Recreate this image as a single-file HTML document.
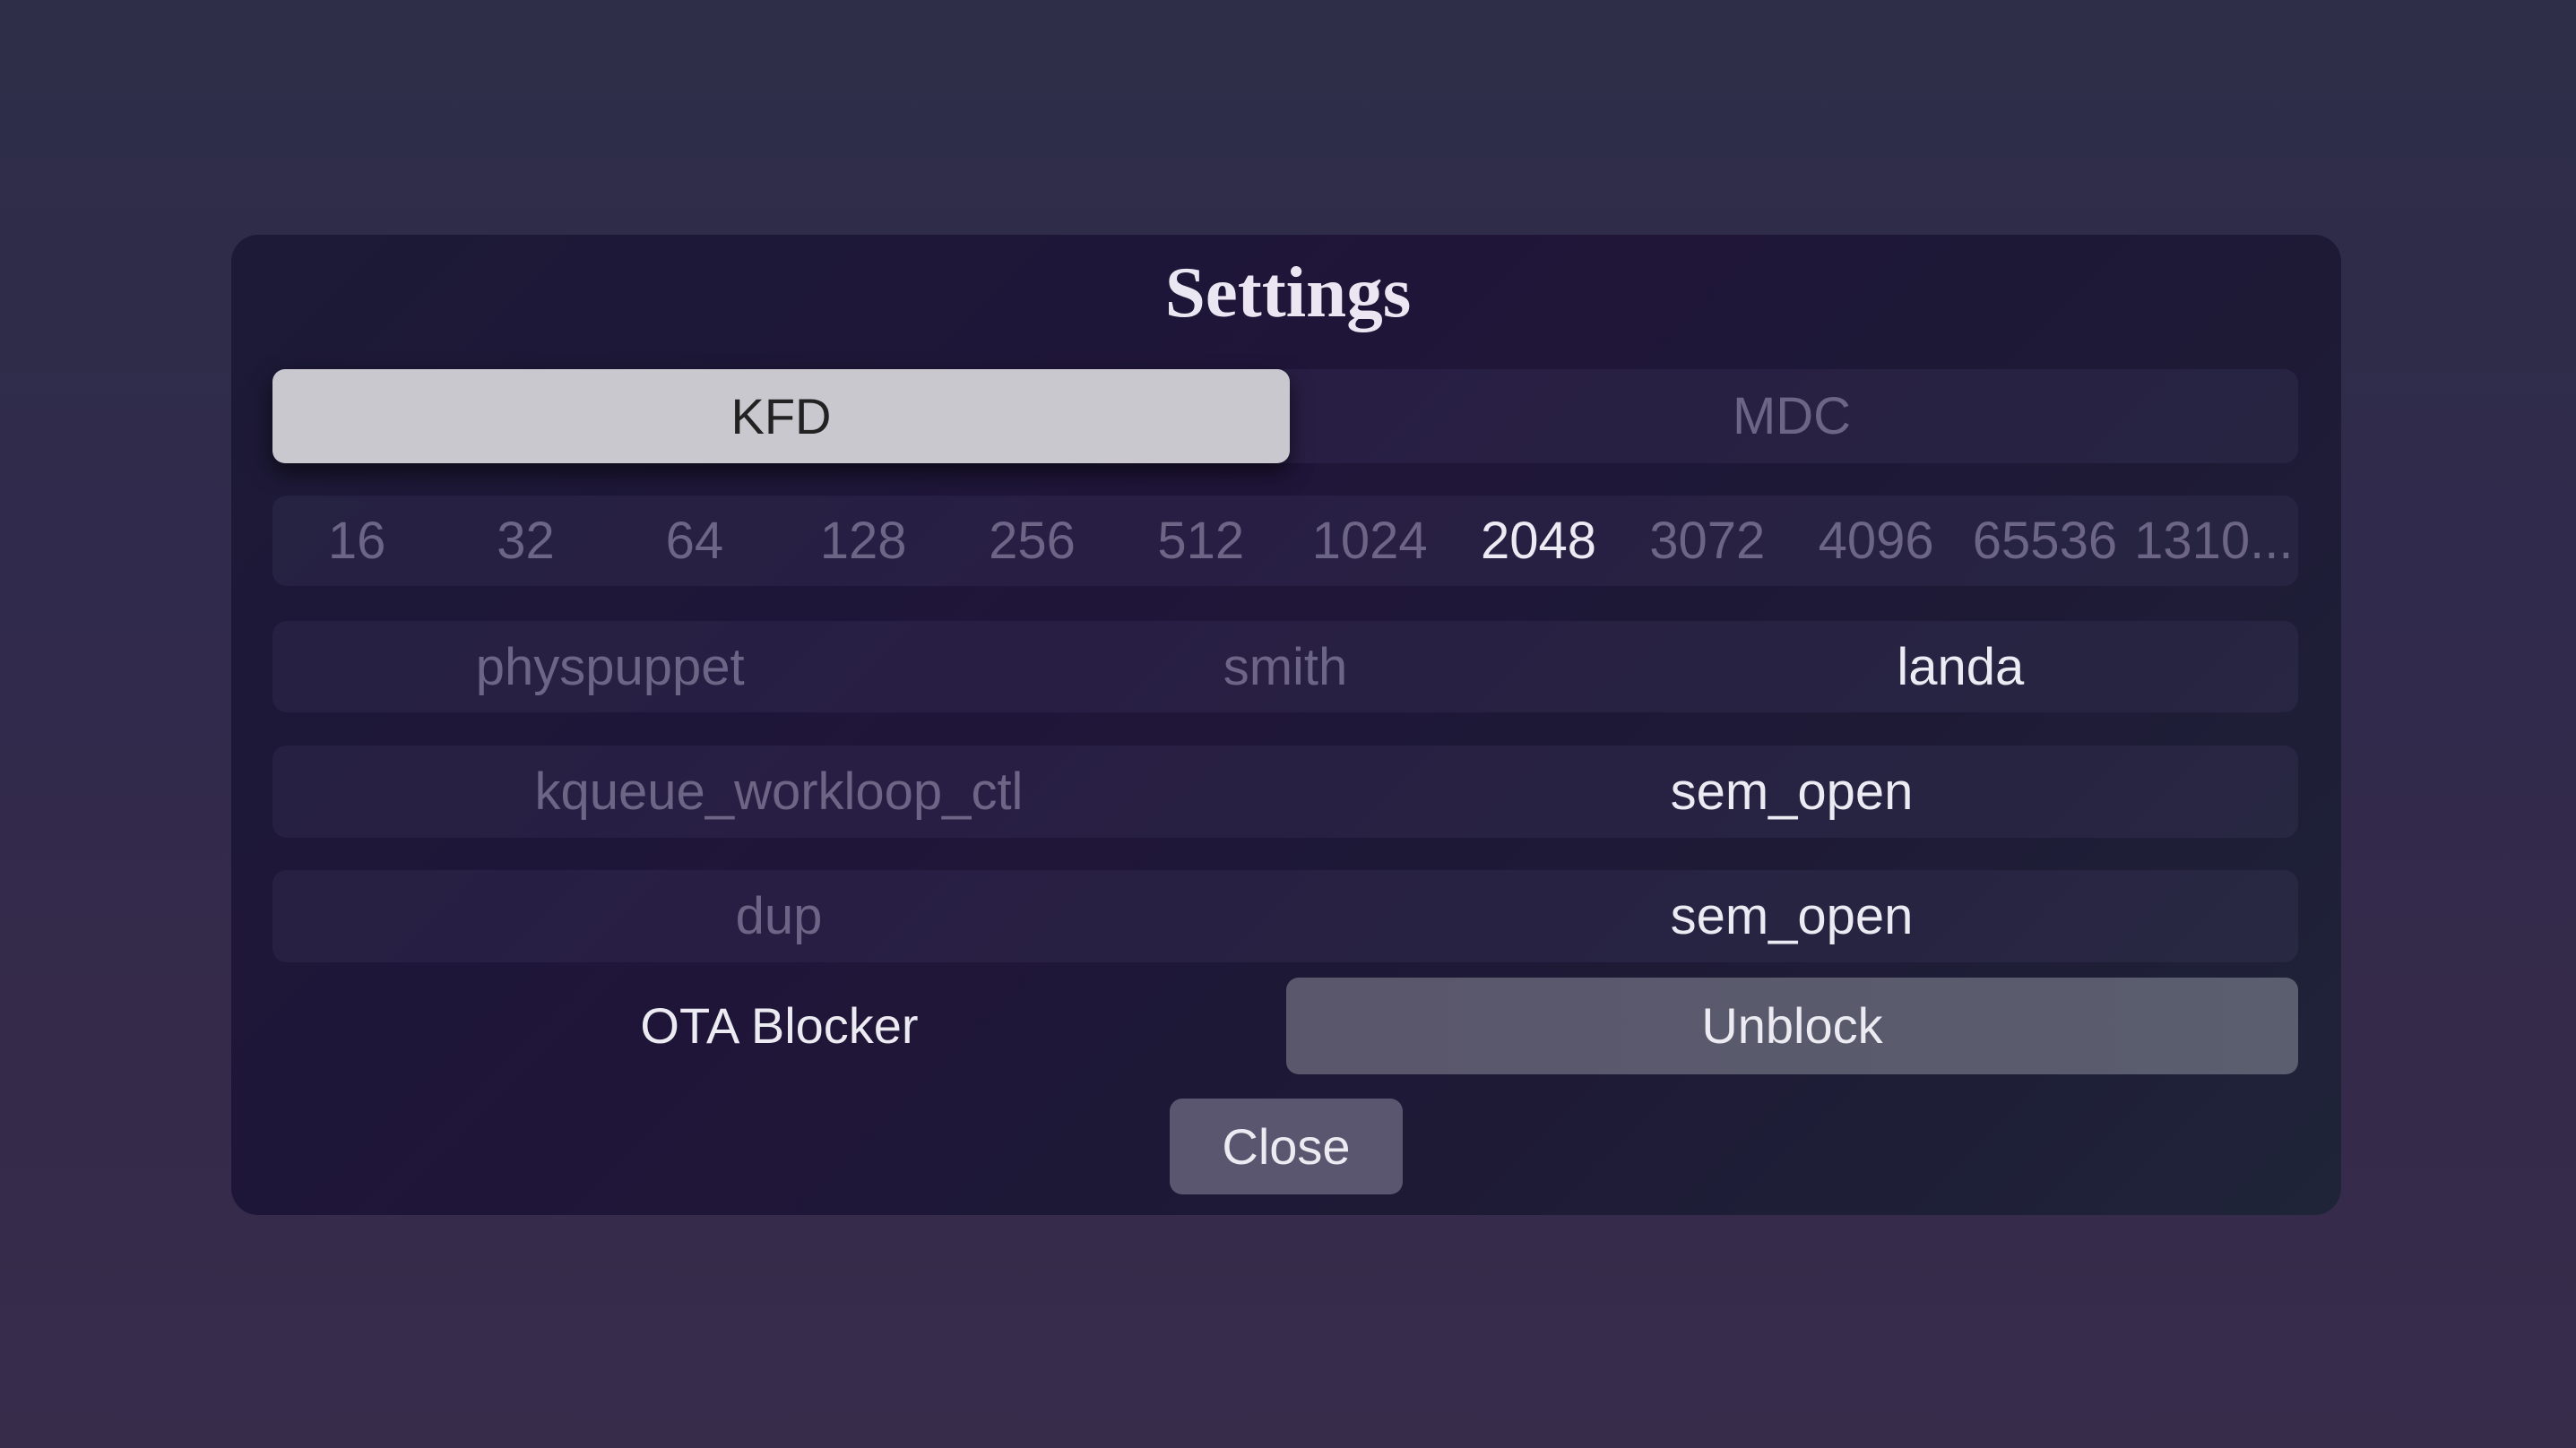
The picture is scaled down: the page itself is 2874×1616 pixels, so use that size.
<!DOCTYPE html>
<html><head><meta charset="utf-8"><style>
html,body{margin:0;padding:0}
body{width:2874px;height:1616px;overflow:hidden;position:relative;
background:linear-gradient(180deg,#2e2e48 0%,#302a4c 40%,#362a4a 75%,#372d4b 100%);
font-family:"Liberation Sans",sans-serif}
.modal{position:absolute;left:258px;top:262px;width:2354px;height:1094px;border-radius:30px;
background:linear-gradient(135deg,#1c1a36 0%,#1f1539 40%,#1e1a36 70%,#1f2438 100%);}
.title{position:absolute;left:0;right:0;top:276px;text-align:center;font-family:"Liberation Serif",serif;font-weight:bold;font-size:81px;color:#ebe7f2;line-height:100px}
.row{position:absolute;left:304px;width:2260px;display:flex;border-radius:16px;background:rgba(120,110,160,0.11);align-items:center}
.row div{flex:1;text-align:center;font-size:58px;color:#6c6585}
.row div.on{color:#eceaf2}
.seg{top:412px;height:105px}
.kfd{position:absolute;left:304px;top:412px;width:1135px;height:105px;border-radius:14px;background:#c9c8ce;box-shadow:0 10px 24px rgba(0,0,0,0.6);text-align:center;line-height:105px;font-size:56px;color:#222}
.b{position:absolute;text-align:center;font-size:56px;color:#ecebf2;border-radius:14px}
</style></head><body>
<div class="modal"></div>
<div class="title">Settings</div>
<div class="row seg"><div></div><div>MDC</div></div>
<div class="kfd">KFD</div>
<div class="row" style="top:553px;height:101px"><div>16</div><div>32</div><div>64</div><div>128</div><div>256</div><div>512</div><div>1024</div><div class="on">2048</div><div>3072</div><div>4096</div><div>65536</div><div>1310...</div></div>
<div class="row" style="top:693px;height:102px"><div>physpuppet</div><div>smith</div><div class="on">landa</div></div>
<div class="row" style="top:832px;height:103px"><div>kqueue_workloop_ctl</div><div class="on">sem_open</div></div>
<div class="row" style="top:971px;height:103px"><div>dup</div><div class="on">sem_open</div></div>
<div class="b" style="left:304px;top:1091px;width:1131px;line-height:108px">OTA Blocker</div>
<div class="b" style="left:1435px;top:1091px;width:1129px;height:108px;line-height:108px;background:linear-gradient(90deg,#5a566c,#5a5e6e)">Unblock</div>
<div class="b" style="left:1305px;top:1226px;width:260px;height:107px;line-height:107px;background:#5a5670">Close</div>
</body></html>
